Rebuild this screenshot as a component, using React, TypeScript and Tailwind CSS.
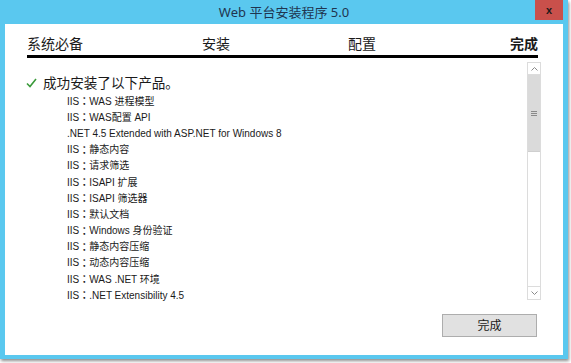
import React from 'react';

const items = [
    'IIS：WAS 进程模型',
    'IIS：WAS配置 API',
    '.NET 4.5 Extended with ASP.NET for Windows 8',
    'IIS：静态内容',
    'IIS：请求筛选',
    'IIS：ISAPI 扩展',
    'IIS：ISAPI 筛选器',
    'IIS：默认文档',
    'IIS：Windows 身份验证',
    'IIS：静态内容压缩',
    'IIS：动态内容压缩',
    'IIS：WAS .NET 环境',
    'IIS：.NET Extensibility 4.5',
];

const font = { fontFamily: '"Segoe UI", "Noto Sans", "Noto Sans CJK SC", sans-serif' };
const listFont = { fontFamily: '"Liberation Sans", "Noto Sans CJK SC", sans-serif' };
const colonFont = { fontFamily: '"Noto Sans CJK TC", sans-serif' };

// the full-width colon is centred in the original, as in the TC cut
const Item: React.FC<{ text: string }> = ({ text }) => {
    const i = text.indexOf('：');
    return (
        <li className="h-[16.2px] flex items-center whitespace-nowrap">
            {i < 0 ? text : (
                <>
                    {text.slice(0, i)}
                    <span style={colonFont} className="font-bold leading-none">：</span>
                    {text.slice(i + 1)}
                </>
            )}
        </li>
    );
};

const ScrollBar: React.FC = () => (
    <div className="w-[14px] h-[238px] border border-[#dcdcdc] bg-white flex flex-col">
        <div className="h-[12px] border-b border-[#dcdcdc] flex items-center justify-center">
            <svg width="7" height="4" viewBox="0 0 7 4">
                <polyline points="0.5,3.5 3.5,0.5 6.5,3.5" fill="none" stroke="#8a8a8a" strokeWidth="1" />
            </svg>
        </div>
        <div className="h-[77px] bg-[#dadada] border-b border-[#cfcfcf] flex flex-col items-center justify-center gap-[1px]">
            <div className="w-[6px] h-px bg-[#8a8a8a]" />
            <div className="w-[6px] h-px bg-[#8a8a8a]" />
            <div className="w-[6px] h-px bg-[#8a8a8a]" />
        </div>
        <div className="flex-1" />
        <div className="h-[13px] border-t border-[#dcdcdc] flex items-center justify-center">
            <svg width="7" height="4" viewBox="0 0 7 4">
                <polyline points="0.5,0.5 3.5,3.5 6.5,0.5" fill="none" stroke="#8a8a8a" strokeWidth="1" />
            </svg>
        </div>
    </div>
);

export default function App() {
    return (
        <div className="w-[571px] h-[363px] bg-white" style={font}>
            <div className="w-[568px] h-[359px] bg-[#5ac8ef] flex flex-col shadow-[1px_2px_3px_rgba(0,0,0,0.45)]">
                {/* title bar */}
                <div className="relative h-[24px] flex items-center justify-center">
                    <span className="text-[13px] text-[#1f3550] leading-none pt-px">Web 平台安装程序 5.0</span>
                    <div className="absolute right-[5px] top-0 w-[28px] h-[20px] bg-[#c9504b] flex items-center justify-center">
                        <span className="text-[11px] font-bold text-[#1a1a1a] leading-none" style={{ fontFamily: '"Liberation Sans", sans-serif' }}>x</span>
                    </div>
                </div>

                {/* body */}
                <div className="mx-[5px] mb-[4px] flex-1 bg-white flex flex-col">
                    <div className="ml-[22px] mt-[10px] w-[511px] flex items-end text-[14px] leading-[20px] text-[#1a1a1a] border-b-[3px] border-black pb-px">
                        <span>系统必备</span>
                        <span className="ml-[119px]">安装</span>
                        <span className="ml-[118px]">配置</span>
                        <span className="ml-auto font-bold">完成</span>
                    </div>

                    <div className="mt-[4px] h-[238px] flex">
                        <div className="flex-1 pl-[21px] pt-[11px]">
                            <div className="flex items-center h-[20px]">
                                <svg width="11" height="10" viewBox="0 0 11 10" className="mb-px">
                                    <polyline points="1,5.5 4,8.5 10,1" fill="none" stroke="#3a9a3a" strokeWidth="1.6" />
                                </svg>
                                <span className="ml-[6px] text-[13.6px] text-[#1a1a1a]">成功安装了以下产品。</span>
                            </div>
                            <ul className="ml-[41px] text-[10px] text-[#1a1a1a]" style={listFont}>
                                {items.map(t => (
                                    <Item key={t} text={t} />
                                ))}
                            </ul>
                        </div>
                        <div className="mr-[22px]">
                            <ScrollBar />
                        </div>
                    </div>

                    <div className="mt-[14px] flex justify-end pr-[26px]">
                        <button className="w-[95px] h-[23px] bg-[#e1e1e1] border border-[#adadad] text-[12px] text-[#1a1a1a] flex items-center justify-center">
                            完成
                        </button>
                    </div>
                </div>
            </div>
        </div>
    );
}
